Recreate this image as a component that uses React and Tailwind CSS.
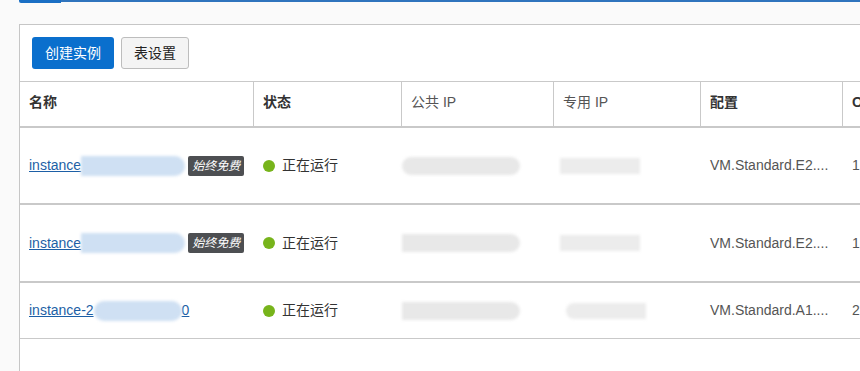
import React from "react";

const font = { fontFamily: '"Liberation Sans", "Noto Sans CJK SC", sans-serif' };

const rows = [
  { name: "instance", tag: true, shape: "VM.Standard.E2....", ocpu: "1", h: "h-[77px]", border: "border-b-2" },
  { name: "instance", tag: true, shape: "VM.Standard.E2....", ocpu: "1", h: "h-[78px]", border: "border-b-2" },
  { name: "instance-2", tag: false, shape: "VM.Standard.A1....", ocpu: "2", h: "h-[56px]", border: "border-b" },
];

function Blob({ className }) {
  // 打码区域
  return <div className={"shrink-0 blur-[1.5px] " + className} />;
}

function Row({ row, i }) {
  return (
    <div className={`flex items-center ${row.h} ${row.border} border-[#c9c9c9] text-[14px]`}>
      <div className="w-[234px] shrink-0 pl-[9px] flex items-center">
        <a href="#" className="text-[#1d5fa6] underline">
          {row.name}
        </a>
        {row.tag ? (
          <>
            <Blob className="w-[104px] h-[20px] bg-[#cfe0f3] rounded-r-full" />
            <span className="ml-[3px] h-[20px] px-[4px] flex items-center bg-[#4d4f52] text-white text-[12px] italic rounded-[2px]">
              始终免费
            </span>
          </>
        ) : (
          <>
            <Blob className="w-[88px] h-[20px] bg-[#cfe0f3] rounded-full" />
            <span className="text-[#1d5fa6] underline">0</span>
          </>
        )}
      </div>
      <div className="w-[148px] shrink-0 pl-[9px] flex items-center gap-[7px] text-[#333]">
        <span className="w-[12px] h-[12px] rounded-full bg-[#77b41b]" />
        正在运行
      </div>
      <div className="w-[152px] shrink-0 flex items-center">
        <Blob className={`w-[118px] h-[18px] bg-[#e8e8e8] ${i === 0 ? "rounded-full" : "rounded-r-full"}`} />
      </div>
      <div className="w-[147px] shrink-0 pl-[6px] flex items-center">
        <Blob className={`w-[80px] h-[16px] bg-[#ececec] ${i === 2 ? "ml-[6px] rounded-l-full" : ""}`} />
      </div>
      <div className="w-[142px] shrink-0 pl-[9px] text-[#555]">{row.shape}</div>
      <div className="pl-[9px] text-[#555]">{row.ocpu}</div>
    </div>
  );
}

export default function App() {
  const head = [
    { t: "名称", w: "w-[234px]", b: true },
    { t: "状态", w: "w-[148px]", b: true },
    { t: "公共 IP", w: "w-[152px]", b: false },
    { t: "专用 IP", w: "w-[147px]", b: false },
    { t: "配置", w: "w-[142px]", b: true },
    { t: "OCPU 计数", w: "w-[120px]", b: true },
  ];

  return (
    <div className="w-[860px] h-[371px] overflow-hidden bg-[#fafafa]" style={font}>
      {/* 탭 표시줄 */}
      <div className="flex items-start h-[3px]">
        <div className="w-[19px] h-[2px]" />
        <div className="w-[42px] h-[3px] bg-[#1a6fc4] rounded-bl-[2px]" />
        <div className="flex-1 h-[2px] bg-[#2f74bd]" />
      </div>

      <div className="mt-[21px] ml-[19px] w-[960px] h-[400px] bg-white border border-[#c6c6c6]">
        <div className="flex gap-[7px] px-[12px] py-[12px]">
          <button className="h-[32px] px-[13px] rounded-[3px] bg-[#0a6fcd] text-white text-[14px]">创建实例</button>
          <button className="h-[32px] px-[12px] rounded-[3px] bg-[#f4f4f4] border border-[#bdbdbd] text-[#222] text-[14px]">
            表设置
          </button>
        </div>

        <div className="flex h-[47px] border-t border-b-2 border-[#c9c9c9] text-[14px]">
          {head.map((h) => (
            <div
              key={h.t}
              className={`${h.w} shrink-0 pl-[9px] pt-[10px] border-r border-[#c9c9c9] ${h.b ? "font-bold text-[#333]" : "text-[#555]"}`}
            >
              {h.t}
            </div>
          ))}
        </div>

        {rows.map((r, i) => (
          <Row key={i} row={r} i={i} />
        ))}
      </div>
    </div>
  );
}
